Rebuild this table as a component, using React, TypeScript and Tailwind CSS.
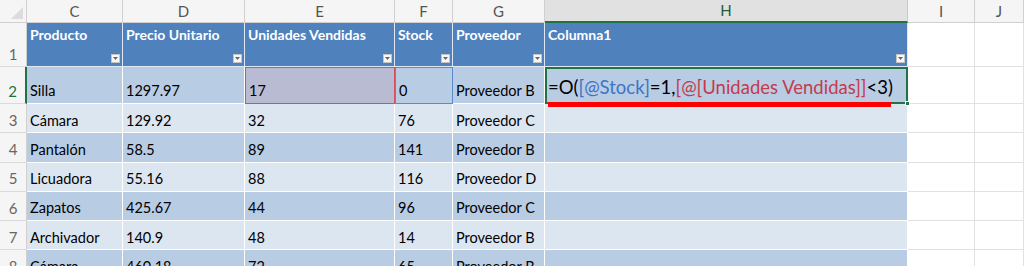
import React from "react";

type Row = {
  n: number;
  producto: string;
  precio: string;
  unidades: string;
  stock: string;
  proveedor: string;
};

const rows: Row[] = [
  { n: 3, producto: "Cámara", precio: "129.92", unidades: "32", stock: "76", proveedor: "Proveedor C" },
  { n: 4, producto: "Pantalón", precio: "58.5", unidades: "89", stock: "141", proveedor: "Proveedor B" },
  { n: 5, producto: "Licuadora", precio: "55.16", unidades: "88", stock: "116", proveedor: "Proveedor D" },
  { n: 6, producto: "Zapatos", precio: "425.67", unidades: "44", stock: "96", proveedor: "Proveedor C" },
  { n: 7, producto: "Archivador", precio: "140.9", unidades: "48", stock: "14", proveedor: "Proveedor B" },
  { n: 8, producto: "Cámara", precio: "460.18", unidades: "72", stock: "65", proveedor: "Proveedor B" },
];

const headers = ["Producto", "Precio Unitario", "Unidades Vendidas", "Stock", "Proveedor", "Columna1"];
const letters = ["C", "D", "E", "F", "G", "H", "I", "J"];

const FilterButton: React.FC = () => (
  <div className="self-end mb-[3px] mr-[2px] w-[9px] h-[9px] bg-[#f7f7f7] border border-[#c4c4c4] flex items-center justify-center">
    <svg width="5" height="3" viewBox="0 0 5 3">
      <path d="M0 0h5L2.5 3z" fill="#666" />
    </svg>
  </div>
);

const RowHeader: React.FC<{ n: number; active?: boolean }> = ({ n, active }) => (
  <div
    className={
      "flex items-end justify-center pb-[1px] text-[15px] bg-[#f5f5f5] border-b border-[#dadada] " +
      (active ? "text-[#217346] border-r-2 border-r-[#217346] bg-[#e8e8e8]" : "text-[#666] border-r border-r-[#d0d0d0]")
    }
  >
    {n}
  </div>
);

const Cell: React.FC<{ children?: React.ReactNode; dark: boolean; className?: string }> = ({
  children,
  dark,
  className = "",
}) => (
  <div
    className={
      "flex items-end pl-[3px] pb-[1px] text-[14.5px] text-black whitespace-nowrap overflow-hidden border-r border-b border-white " +
      (dark ? "bg-[#b8cce4] " : "bg-[#dce6f1] ") +
      className
    }
  >
    {children}
  </div>
);

const Blank: React.FC = () => <div className="bg-white border-r border-b border-[#e1e1e1]" />;

export default function App() {
  return (
    <div className="w-[1024px] h-[266px] overflow-hidden bg-white font-['Lato',sans-serif]">
      <div className="grid grid-cols-[27px_96px_122px_150px_58px_92px_363px_67px_49px] grid-rows-[23px_44px_37px_29.3px_29.3px_29.3px_29.3px_29.3px_29.3px]">
        {/* column letters */}
        <div className="bg-[#f5f5f5] border-r border-b border-[#d0d0d0] flex items-end justify-end p-[3px]">
          <svg width="12" height="12" viewBox="0 0 12 12">
            <path d="M12 0v12H0z" fill="#dcdcdc" />
          </svg>
        </div>
        {letters.map((l) => (
          <div
            key={l}
            className={
              "flex items-center justify-center text-[15px] border-r " +
              (l === "H"
                ? "bg-[#e1e1e1] text-[#215f38] border-b-2 border-b-[#217346] border-r-[#c8c8c8]"
                : "bg-[#f5f5f5] text-[#555] border-b border-[#d0d0d0]")
            }
          >
            {l}
          </div>
        ))}

        {/* row 1: table headers */}
        <RowHeader n={1} />
        {headers.map((h) => (
          <div
            key={h}
            className="flex flex-col justify-between bg-[#4f81bd] border-r border-b border-[#dfe7f2] pl-[3px] pt-[1px] text-[14px] font-bold text-white whitespace-nowrap overflow-hidden"
          >
            <span>{h}</span>
            <FilterButton />
          </div>
        ))}
        <Blank />
        <Blank />

        {/* row 2: active row with formula */}
        <RowHeader n={2} active />
        <Cell dark>Silla</Cell>
        <Cell dark>1297.97</Cell>
        <Cell dark className="!bg-[#b8bbd2] border-[1.5px] !border-[#d6505e]">
          17
        </Cell>
        <Cell dark className="border-[1.5px] !border-[#5b8ad0]">
          0
        </Cell>
        <Cell dark>Proveedor B</Cell>
        <div className="relative flex items-end bg-[#b8cce4] border-2 border-[#217346] pl-[1px] pb-0 text-[18.5px] text-black whitespace-nowrap">
          <span>
            =O(<span className="text-[#3e74c4]">[@Stock]</span>=1,
            <span className="text-[#c43b4c]">[@[Unidades Vendidas]]</span>&lt;3)
          </span>
          <div className="absolute left-[1px] right-[15px] bottom-[-5px] h-[5px] bg-[#ff0000]" />
          <div className="absolute right-[-4px] bottom-[-4px] w-[5px] h-[5px] bg-[#217346] border border-white" />
        </div>
        <Blank />
        <Blank />

        {/* data rows */}
        {rows.map((r) => {
          const dark = r.n % 2 === 0;
          return (
            <React.Fragment key={r.n}>
              <RowHeader n={r.n} />
              <Cell dark={dark}>{r.producto}</Cell>
              <Cell dark={dark}>{r.precio}</Cell>
              <Cell dark={dark}>{r.unidades}</Cell>
              <Cell dark={dark}>{r.stock}</Cell>
              <Cell dark={dark}>{r.proveedor}</Cell>
              <Cell dark={dark} />
              <Blank />
              <Blank />
            </React.Fragment>
          );
        })}
      </div>
    </div>
  );
}
